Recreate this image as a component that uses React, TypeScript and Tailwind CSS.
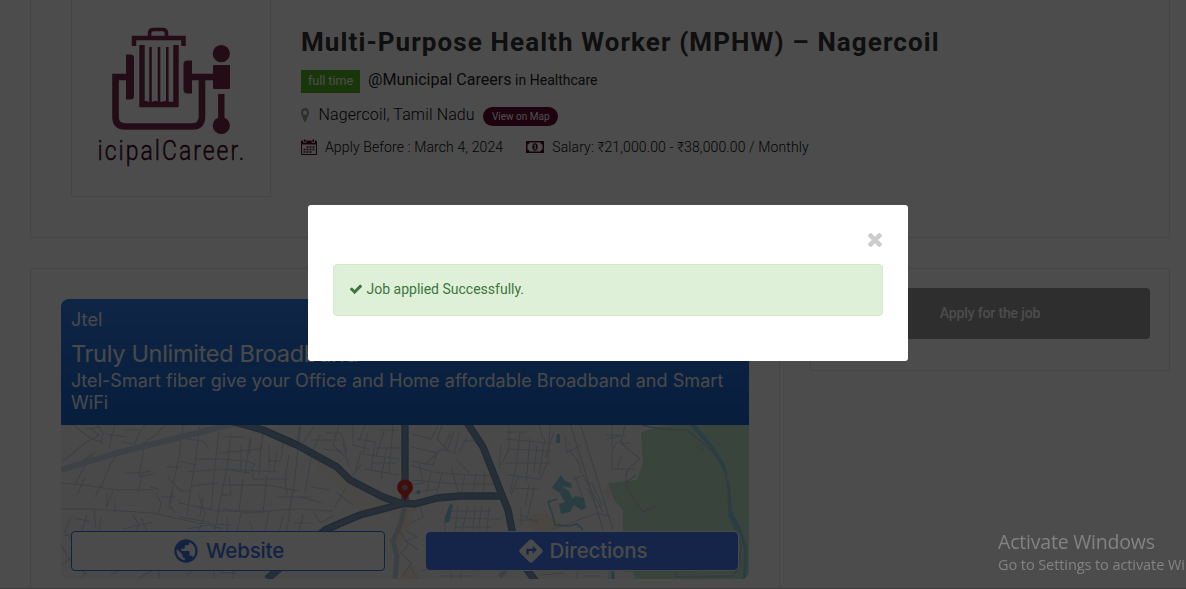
import React from "react";
import { MdDirections, MdPublic } from "react-icons/md";

const streets = [
  // north-west quarter
  "M2 36L12 28L24 18L38 10L29 3M12 0L30 14L42 17M20 37L31 29M54 0L51 10L48 24M62 5H78M46 9L66 12M71 26L78 8L84 0M104 0L96 9L78 21",
  "M36 0L42 8L40 20M24 4L40 2M60 17L72 19M90 46L80 48H64M82 46L77 68M84 17L78 52L95 48M122 0L118 32L112 60L108 84M126 14L142 16L148 24",
  "M0 58L24 60L56 65H92M14 60L22 44L34 26M40 62L50 38L56 30M0 84L32 84L92 88L136 98L170 100M16 70L24 52M34 72L40 60M52 66L46 82",
  "M107 52L114 60L120 66H130M95 68L100 78L98 88M100 72H114M46 68V82M54 72V88M3 111L14 108M0 120L8 134L26 150M10 92L4 108",
  "M26 90L19 112M33 84L35 104M40 92L38 108M14 93L30 97M72 90L78 100L72 112M80 92L86 106M62 104L92 97M20 140L38 134L62 138M50 150L72 136",
  // centre-left blocks
  "M139 0L134 38L130 62L126 90M158 6L154 40L150 86M134 34H160L182 36M126 47L160 44L190 48M130 61L158 58M118 78L158 86H200",
  "M170 8L166 42L160 72L154 105M180 20V46M189 12L184 50M200 18L198 50M208 20V48M216 26L213 46M162 12H184M158 28L200 24M164 44L216 47",
  "M181 35L194 39L190 46M192 46V54H228M228 30L224 54L226 70M160 60H206L238 66M168 50L170 70H160M182 54L178 86M206 50L202 88",
  "M162 84L186 88L218 85L238 84L272 86M237 25L233 60L228 88M250 32L244 68M238 72L262 78M250 62L269 65M216 72L250 72M222 90L218 108",
  "M166 92V106M180 88L176 106M188 96L192 105M208 88L204 106M229 88L225 107M233 98H250M242 90L238 106M253 88L260 98L273 90",
  "M126 104L148 100L162 104M145 86L138 106M112 66L108 80L114 88M137 68L143 86M142 72L139 92M118 92L148 97",
  "M254 0L242 18M259 10L252 26L274 39M265 8H280L286 26M278 0L272 20L284 32M250 15H278M262 24L280 26",
  "M282 18L288 42M292 0V20L308 24M296 14L315 17M304 0L298 16M307 7L302 29L338 34M314 17L310 45L326 48M326 22L320 54",
  "M315 23H340M310 38H335M323 6L315 31M332 0L328 48M318 5H337M303 44L338 50M292 50L300 40M300 26L294 48M284 64L274 82M276 68L292 80",
  "M190 14L188 30M202 7L200 26M222 17L220 34M207 36H220M118 36L136 40M89 62L98 64M105 42H120",
  // centre and east-centre blocks
  "M351 9L370 14L377 0M350 22L376 28L372 40L350 36M381 0L376 14L388 26M364 40L380 24L396 29M389 8L382 25M393 6L386 26",
  "M349 40L372 47L392 49L430 51M358 38L362 58L349 60M370 48L366 66M381 48L376 68M390 42L398 70M404 49L400 70M415 48L412 70M424 46L422 70",
  "M351 55L396 59L434 59M353 68L376 64M395 34L408 48M402 16H420M398 7L394 27M406 12L398 28M358 76L362 92L350 98",
  "M397 80L394 106M407 80L401 106M414 80L412 104M421 80L417 106M428 82L426 106M390 86H430M388 93L440 94M394 102H430M384 106V98",
  "M440 20L438 44M448 0V24L440 40M459 8L455 42L449 68M469 13L465 58M476 20L473 46M484 14L478 50M489 0L487 38",
  "M445 7H466M444 14L488 18M446 24L490 26M444 38L490 38M446 50L478 54M447 63L478 64M478 0L482 14M493 7L484 33M504 10L506 28L520 20",
  "M458 50L450 70M468 59L464 82M473 63L466 94M486 38L479 55M460 90L477 98M460 82V101M456 95H477M490 105L536 88L548 91",
  "M508 24L518 38L520 48M512 55L522 50L542 87M526 60L531 58L541 80L536 83L526 63M514 51L523 76",
  "M545 10H560M551 0V22M545 14L565 10M564 0L560 18L579 34L569 42L564 50M569 18H555L551 26V44H574M561 30L556 44",
  "M566 45L564 62L575 78L582 87L580 104M582 87L595 81M582 90L588 99H600M577 105H590L600 109",
  // southern edge
  "M3 106L10 114M0 140L14 130M20 153L28 143H50M78 153L92 145M98 145V154M125 152L132 144M153 154V144M160 148H176M172 144V154",
  "M338 105L347 120L340 128L350 138L341 152M345 106L356 112L345 116L357 125M349 140L356 154M359 146L374 143M380 151H412",
  "M390 146V154M400 144V154M479 150L503 148M516 143V154M523 151H538M548 144V154M563 146H604M635 144L637 154",
];

const bigRoads = [
  "M170 -4L202 5L236 20L276 42L289 55L322 72L339 78L354 79L376 73L399 71H439",
  "M344 -2V78",
  "M405 -4L422 22L430 42L439 65L447 85L451 105L455 125L464 142L476 158",
  "M344 78L322 84L299 90L280 98L264 105L246 120L206 154",
];

function CityMap() {
  return (
    <svg className="absolute inset-0 h-full w-full" viewBox="0 0 688 154" fill="none">
      <rect width="688" height="154" fill="#f4f5f6" />
      <path d="M236 20L276 42L289 55L322 72L344 70V88L300 88L285 70L262 50Z" fill="#f8f0e4" />
      <path d="M469 90L486 88L496 95L503 100L487 108H474L468 101Z" fill="#f8eadc" />
      <path d="M339 84L358 78L350 98L338 128L332 118Z" fill="#f8efdf" />
      <path d="M340 148L354 140L360 154H340Z" fill="#f8efdf" />
      <path d="M542 66L548 58L550 78Z" fill="#f8e8e2" />
      <path d="M580 7L600 1L612 0H688V154H574L562 107V85L553 75L547 58L576 55L582 38Z" fill="#bfe4cc" />
      {streets.map((d) => (
        <path key={d} d={d} stroke="#ccd4e0" strokeWidth="1.1" />
      ))}
      <path d="M509 -2L542 105M519 -2L552 105" stroke="#cdd1d8" strokeWidth="1.2" />
      <path
        d="M580 0L600 4L626 5L637 14L652 27L664 47L667 64L668 91L674 103L680 120L679 141L672 151L615 152V147"
        stroke="#b9c3cb"
        strokeWidth="1.6"
      />
      <path d="M636 22L646 18L639 27M575 50L565 57L571 72L582 87L595 81" stroke="#bfc8ce" strokeWidth="1.2" />
      <path d="M0 45L56 28L116 13L176 -2" stroke="#cfdde9" strokeWidth="6" />
      <path d="M239 0L237 19" stroke="#cfdde9" strokeWidth="3" />
      <path d="M344 80L340 98L332 116L336 132L334 154M439 152L449 139" stroke="#ccd6e0" strokeWidth="5" />
      {bigRoads.map((d) => (
        <path key={d} d={d} stroke="#6f8fb0" strokeWidth="7.400" strokeLinejoin="round" />
      ))}
      {bigRoads.map((d) => (
        <path key={`${d}-core`} d={d} stroke="#819fbd" strokeWidth="4.600" strokeLinejoin="round" />
      ))}
      <g fill="#88cfe2">
        <path d="M629 0H635L652 21L664 40L669 60L671 86L681 106L686 123L685 154H682L683 124L679 110L669 93L667 53L660 39L649 23Z" />
        <path d="M496 9H499V18H495V14ZM389 79L392 80L388 97L383 98L384 92ZM355 66L359 65V69H356Z" />
        <path d="M492 61L500 50L504 56L510 58L511 63L500 61L508 66L512 74L514 71L523 73L525 83L520 85L513 80L509 87L500 89L498 79L504 77L498 67L491 63Z" />
        <path d="M550 143H553L554 154H550Z" />
      </g>
      <path d="M496 74L487 77L491 88L494 100L508 101L516 99L522 105" stroke="#88cfe2" strokeWidth="1.6" />
      <path d="M344 77C342 69 336 68 336 62.500a8 8 0 0 1 16 0C352 68 346 69 344 77Z" fill="#dd302c" />
      <circle cx="344" cy="62.500" r="2.700" fill="#8599aa" />
    </svg>
  );
}

function BrandLogo() {
  return (
    <svg className="h-[150px] w-[160px]" viewBox="91 20 160 150" fill="none">
      <g stroke="#762b46">
        <path d="M149.500 36V33.500q0-4 4-4h9q4 0 4 4V36" strokeWidth="3.600" />
        <path d="M134 46V38H183.500V46" strokeWidth="4.500" />
        <path d="M142 45V104.500H176V45" strokeWidth="5.400" />
        <path d="M150.500 47V103M159 47V103M167.300 47V103" strokeWidth="2.600" />
        <path
          d="M127 77H115.500V117q0 9.500 10 9.500H192q10 0 10-10V79M191 77H214"
          strokeWidth="6.600"
        />
        <path d="M221.300 94V119" strokeWidth="6.400" />
      </g>
      <g fill="#762b46">
        <path d="M126 54.500h4.500q3.500 0 3.500 3.500v38q0 3.500-3.500 3.500H126Z" />
        <path d="M192 60.500h-4.500q-4 0-4 4v25q0 4 4 4H192Z" />
        <circle cx="221.300" cy="53.700" r="8.600" />
        <rect x="213" y="65" width="17" height="24" rx="1" />
        <circle cx="221.300" cy="125.500" r="8.600" />
        <path d="M144 101h3l2 2h3l2-2h3l2 2h3l2-2h3l2 2h5v3H143Z" />
      </g>
      <text
        x="119"
        y="160.500"
        transform="scale(0.82 1)"
        textLength="179"
        lengthAdjust="spacing"
        className="text-[28px] font-light"
        fontFamily="Roboto, sans-serif"
        fill="#45081f"
        stroke="#45081f"
        strokeWidth="0.500"
      >
        icipalCareer.
      </text>
    </svg>
  );
}

function CalendarIcon() {
  return (
    <svg className="h-4 w-4 shrink-0" viewBox="0 0 16 16">
      <path d="M0.500 2H15.500V15.500H0.500Z" fill="#fff" stroke="#4a0a1d" />
      <path d="M0 2H16V5.500H0Z" fill="#4a0a1d" />
      <path d="M2.500 0h2.500v3.500H2.500ZM11 0h2.500v3.500h-2.500Z" fill="#4a0a1d" stroke="#fff" strokeWidth="0.800" />
      <path
        d="M5.500 8H13.500M2.500 10.500H13.500M2.500 13H11"
        stroke="#4a0a1d"
        strokeWidth="1.600"
        strokeDasharray="2 1"
      />
    </svg>
  );
}

function MoneyIcon() {
  return (
    <svg className="h-3 w-[18px] shrink-0" viewBox="0 0 18 12">
      <rect width="18" height="12" rx="0.500" fill="#4a0a1d" />
      <path d="M3.500 1.500H14.500Q14.500 3.500 16.500 3.500V8.500Q14.500 8.500 14.500 10.500H3.500Q3.500 8.500 1.500 8.500V3.500Q3.500 3.500 3.500 1.500Z" fill="#fff" />
      <ellipse cx="9" cy="6" rx="2.700" ry="3.700" fill="#4a0a1d" />
      <path d="M7.700 4.300L9 3.500h.7v4h.8v.8H7.600v-.8h1V4.800h-.9Z" fill="#fff" />
    </svg>
  );
}

function JobHeader() {
  return (
    <section className="flex h-[238px] border border-t-0 border-[#e8e8e8] pl-10">
      <div className="flex h-[197px] w-[200px] justify-center border border-t-0 border-[#e8e8e8] pt-5">
        <BrandLogo />
      </div>
      <div className="flex flex-col pl-[30px] pt-6 text-[#333]">
        <h1 className="h-9 whitespace-nowrap text-[26px] font-bold leading-9 tracking-[1.100px]">
          Multi-Purpose Health Worker (MPHW) – Nagercoil
        </h1>
        <div className="mt-2.5 flex h-[23px] items-center">
          <span className="flex h-[23px] w-[59px] items-center justify-center bg-[#50b520] pb-px text-[12.500px] text-white">
            full time
          </span>
          <p className="ml-2 whitespace-nowrap pb-1 text-[14px] leading-5 text-[#222]">
            <span className="text-[16px] tracking-[0.050px]">@Municipal Careers</span> in Healthcare
          </p>
        </div>
        <div className="mt-2.5 flex h-[23px] items-center">
          <svg className="h-[14px] w-2" viewBox="384 128 1024 1536" preserveAspectRatio="none" fill="#999">
            <path d="M1152 640q0-106-75-181t-181-75-181 75-75 181 75 181 181 75 181-75 75-181zm256 0q0 109-33 179l-364 774q-16 33-47.500 52t-67.500 19-67.500-19-46.500-52l-365-774q-33-70-33-179 0-212 150-362t362-150 362 150 150 362z" />
          </svg>
          <span className="ml-[9.500px] whitespace-nowrap text-[16px] font-light tracking-[0.130px] text-[#080808]">
            Nagercoil, Tamil Nadu
          </span>
          <button className="ml-[8.500px] mt-1 h-[19px] w-[75px] rounded-full bg-[#66092d] text-[10px] text-white">
            View on Map
          </button>
        </div>
        <div className="mt-[9px] flex h-6 items-center whitespace-nowrap text-[14px] font-light tracking-[0.120px] text-[#080808]">
          <CalendarIcon />
          <span className="ml-2">Apply Before : March 4, 2024</span>
          <span className="ml-[23px] flex items-center gap-2">
            <MoneyIcon />
            Salary: ₹21,000.00 - ₹38,000.00 / Monthly
          </span>
        </div>
      </div>
    </section>
  );
}

function Advert() {
  return (
    <div className="w-[688px] overflow-hidden rounded-[8px] font-['Inter',sans-serif]">
      <div className="h-[126px] bg-linear-to-b from-[#327de9] to-[#1763cb] px-2.5 pt-2.5 text-[#f5f5f5]">
        <p className="text-[18px] leading-[22px] tracking-[0.200px]">Jtel</p>
        <h2 className="mt-[7px] text-[23.500px] leading-[31px] tracking-[-0.300px]">Truly Unlimited Broadband</h2>
        <p className="mt-px text-[18px] leading-[22px] tracking-[0.050px]">
          Jtel-Smart fiber give your Office and Home affordable Broadband and Smart WiFi
        </p>
      </div>
      <div className="relative h-[154px]">
        <CityMap />
        <div className="relative flex gap-[41px] px-2.5 pt-[106px] text-[20.500px] font-medium tracking-[-0.150px]">
          <button className="flex h-10 w-[314px] items-center justify-center gap-[6px] rounded-[4px] border border-[#3973df] bg-[#fcfcfc] text-[#3973df]">
            <MdPublic className="h-7 w-7" />
            Website
          </button>
          <button className="mt-px flex h-[38px] w-[312px] items-center justify-center gap-[5px] rounded-[4px] bg-[#437df4] text-[#f7f7f7] outline outline-[#f4f5f6]">
            <MdDirections className="h-7 w-7" />
            Directions
          </button>
        </div>
      </div>
    </div>
  );
}

function SuccessDialog() {
  return (
    <div className="fixed inset-0 flex items-start bg-black/70 pl-[308px] pt-[205px]">
      <div role="dialog" className="flex h-[156px] w-[600px] flex-col rounded-[3px] bg-white px-[25px] pt-7">
        <button aria-label="Close" className="mr-px flex h-[14px] w-[14px] self-end">
          <svg className="h-[14px] w-[14px]" viewBox="302 366 1188 1188" fill="#ccc">
            <path d="M1490 1322q0 40-28 68l-136 136q-28 28-68 28t-68-28l-294-294-294 294q-28 28-68 28t-68-28l-136-136q-28-28-28-68t28-68l294-294-294-294q-28-28-28-68t28-68l136-136q28-28 68-28t68 28l294 294 294-294q28-28 68-28t68 28l136 136q28 28 28 68t-28 68l-294 294 294 294q28 28 28 68z" />
          </svg>
        </button>
        <div className="mt-[17px] flex h-[52px] items-center rounded-[4px] border border-[#d6e9c6] bg-[#dff0d8] pb-0.5 pl-[15px] text-[14px] text-[#3c763d]">
          <svg className="mr-[3.500px] h-[14px] w-[14px]" viewBox="0 0 1792 1792" fill="currentColor">
            <path d="M1671 566q0 40-28 68l-724 724-136 136q-28 28-68 28t-68-28l-136-136-362-362q-28-28-28-68t28-68l136-136q28-28 68-28t68 28l294 295 656-657q28-28 68-28t68 28l136 136q28 28 28 68z" />
          </svg>
          Job applied Successfully.
        </div>
      </div>
    </div>
  );
}

export default function App() {
  return (
    <div className="h-[589px] w-full overflow-hidden bg-white font-['Roboto',sans-serif]">
      <main className="ml-[30px] w-[1140px]">
        <JobHeader />
        <div className="mt-[30px] flex items-start gap-[30px]">
          <section className="h-[330px] w-[750px] border border-[#e8e8e8] pl-[30px] pt-[30px]">
            <Advert />
          </section>
          <aside className="h-[103px] w-[360px] border border-[#e8e8e8] px-[19px] pt-[19px]">
            <button className="h-[51px] w-full rounded-[4px] bg-[#999] text-[14px] font-medium tracking-[-0.150px] text-white">
              Apply for the job
            </button>
          </aside>
        </div>
      </main>
      <SuccessDialog />
      <div className="fixed bottom-0 left-0 h-px w-full bg-[#3b3b3b]" />
      <div className="fixed left-[998px] top-[530px] whitespace-nowrap font-['Open_Sans',sans-serif] text-[#838383]">
        <p className="text-[19.500px] leading-6 tracking-[-0.200px]">Activate Windows</p>
        <p className="text-[14.500px] leading-[22px] tracking-[-0.080px]">Go to Settings to activate Windows.</p>
      </div>
    </div>
  );
}
